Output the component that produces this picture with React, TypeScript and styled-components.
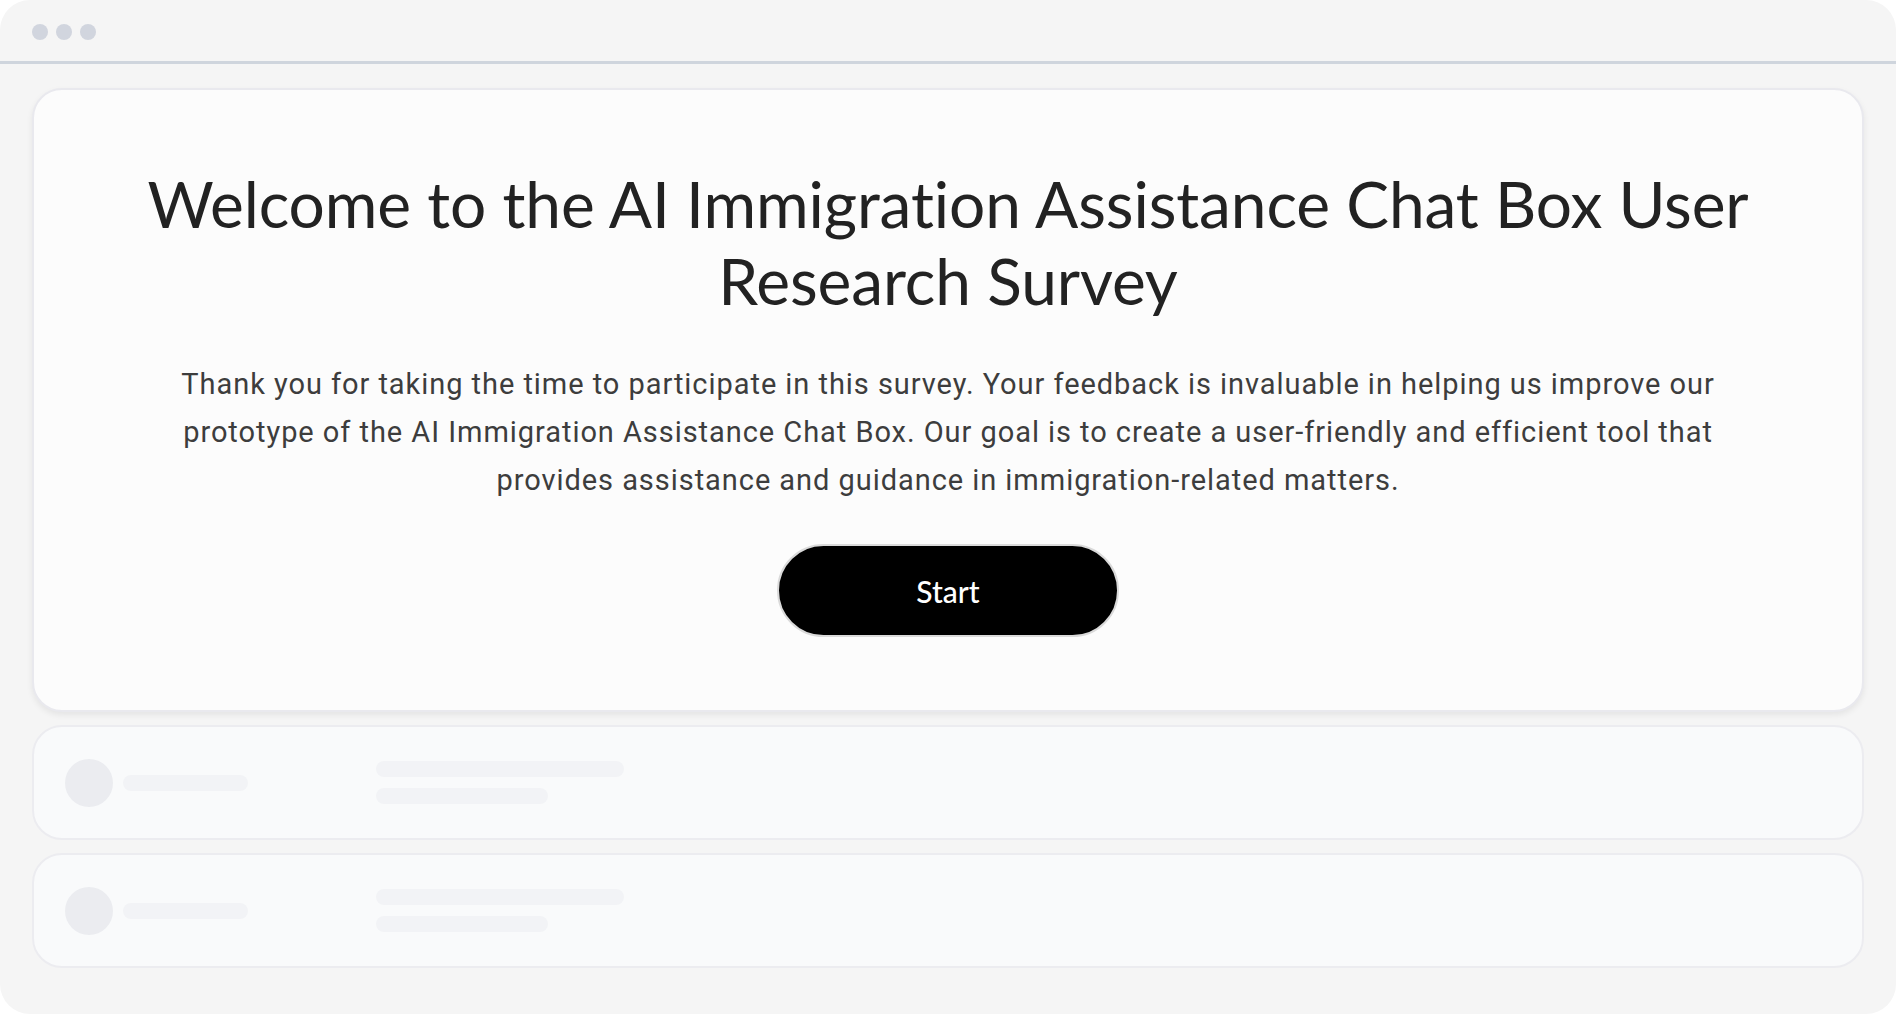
import React from "react";
import styled, { createGlobalStyle } from "styled-components";

const GlobalStyle = createGlobalStyle`
  html, body {
    margin: 0;
    padding: 0;
    background: #ffffff;
  }
  body {
    font-family: "Roboto", "Liberation Sans", sans-serif;
  }
  * { box-sizing: border-box; }
`;

const Frame = styled.div`
  width: 1896px;
  height: 1014px;
  background: #f5f5f5;
  border-radius: 30px;
  overflow: hidden;
  display: flex;
  flex-direction: column;
`;

const TopBar = styled.header`
  height: 64px;
  flex: none;
  display: flex;
  align-items: flex-start;
  gap: 8px;
  padding: 24px 0 0 32px;
  border-bottom: 3px solid #cfd5dd;
`;

const Dot = styled.span`
  width: 16px;
  height: 16px;
  border-radius: 50%;
  background: #d1d5de;
`;

const Content = styled.main`
  display: flex;
  flex-direction: column;
  gap: 13px;
  padding: 24px 32px 0 32px;
`;

const WelcomeCard = styled.section`
  background: #fcfcfc;
  border: 2px solid #e9e9ee;
  border-radius: 30px;
  box-shadow: 0 3px 6px rgba(0, 0, 0, 0.07);
  padding: 75px 40px 73px;
  display: flex;
  flex-direction: column;
  align-items: center;
  text-align: center;
`;

const Title = styled.h1`
  margin: 0;
  max-width: 1680px;
  font-family: "Lato", "Noto Sans", sans-serif;
  font-weight: 400;
  font-size: 64px;
  line-height: 77px;
  color: #222222;
  letter-spacing: -0.1px;
`;

const Intro = styled.p`
  margin: 41px 0 0;
  max-width: 1580px;
  font-family: "Roboto", "Liberation Sans", sans-serif;
  font-size: 29px;
  line-height: 48px;
  letter-spacing: 0.95px;
  color: #3d3d3d;
`;

const StartButton = styled.button`
  margin-top: 40px;
  width: 342px;
  height: 93px;
  border-radius: 999px;
  background: #000000;
  border: 2px solid #dadada;
  color: #ffffff;
  font-family: "Lato", "Noto Sans", sans-serif;
  font-weight: 500;
  font-size: 30px;
  cursor: pointer;
`;

const SkeletonCard = styled.div`
  height: 115px;
  background: #f9fafb;
  border: 2px solid #ececf0;
  border-radius: 30px;
  padding: 0 31px;
  display: flex;
  align-items: center;
`;

const ProfileGroup = styled.div`
  width: 311px;
  flex: none;
  display: flex;
  align-items: center;
  gap: 10px;
`;

const Avatar = styled.div`
  width: 48px;
  height: 48px;
  border-radius: 50%;
  background: #ebecf0;
`;

const Bar = styled.div<{ $w: number }>`
  width: ${(p) => p.$w}px;
  height: 16px;
  border-radius: 8px;
  background: #f2f3f6;
`;

const LinesGroup = styled.div`
  display: flex;
  flex-direction: column;
  gap: 11px;
`;

function Skeleton() {
  return (
    <SkeletonCard>
      <ProfileGroup>
        <Avatar />
        <Bar $w={125} />
      </ProfileGroup>
      <LinesGroup>
        <Bar $w={248} />
        <Bar $w={172} />
      </LinesGroup>
    </SkeletonCard>
  );
}

export default function App() {
  return (
    <>
      <GlobalStyle />
      <Frame>
        <TopBar>
          <Dot />
          <Dot />
          <Dot />
        </TopBar>
        <Content>
          <WelcomeCard>
            <Title>
              Welcome to the AI Immigration Assistance Chat Box User Research Survey
            </Title>
            <Intro>
              Thank you for taking the time to participate in this survey. Your
              feedback is invaluable in helping us improve our prototype of the AI
              Immigration Assistance Chat Box. Our goal is to create a
              user-friendly and efficient tool that provides assistance and
              guidance in immigration-related matters.
            </Intro>
            <StartButton>Start</StartButton>
          </WelcomeCard>
          <Skeleton />
          <Skeleton />
        </Content>
      </Frame>
    </>
  );
}
